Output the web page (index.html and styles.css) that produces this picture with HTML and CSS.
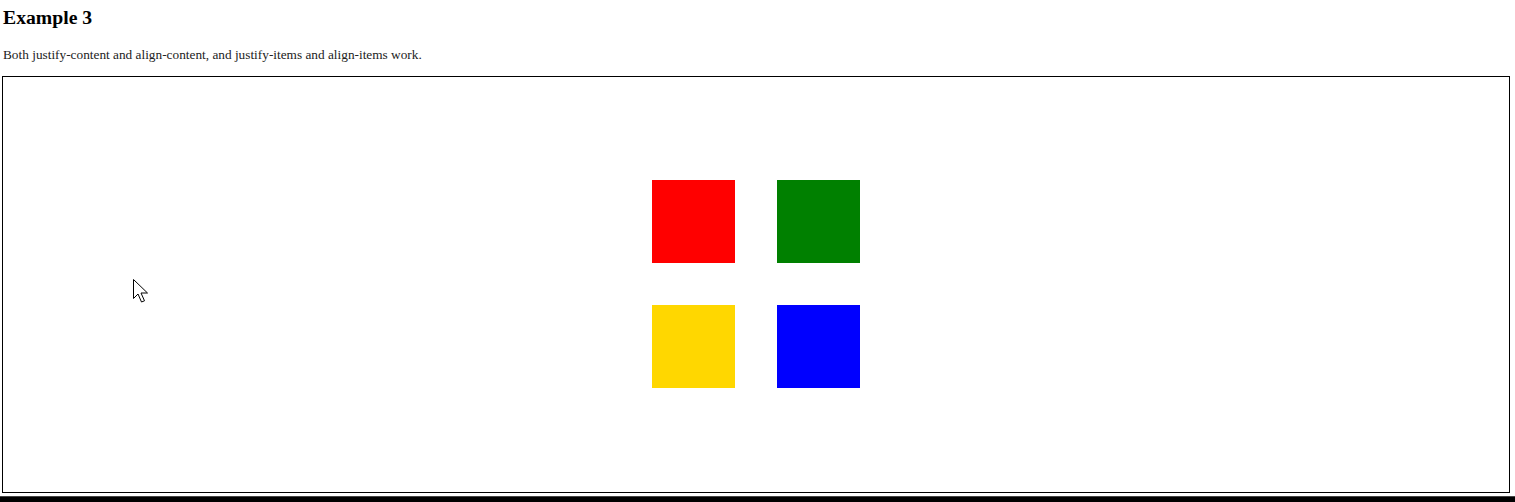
FILE: index.html
```html
<!DOCTYPE html>
<html>
<head>
<meta charset="utf-8">
<title>Example 3</title>
<link rel="stylesheet" href="styles.css">
</head>
<body>
<h3 class="title">Example 3</h3>
<p class="desc">Both justify-content and align-content, and justify-items and align-items work.</p>
<div class="grid">
  <div class="cell red"></div>
  <div class="cell green"></div>
  <div class="cell yellow"></div>
  <div class="cell blue"></div>
</div>
<div class="next"></div>
<svg class="cursor" width="16" height="25" viewBox="0 0 16 25">
  <path d="M0.5 0.5 L0.5 19.5 L5 15 L8.5 23 L11.5 21.8 L8 14 L14.5 14 Z" fill="#fff" stroke="#000" stroke-width="1" stroke-linejoin="miter"/>
</svg>
</body>
</html>
```

FILE: styles.css
```css
html, body {
  margin: 0;
  padding: 0;
  background: #fff;
  overflow: hidden;
}
body {
  padding: 0 5px 0 2px;
  font-family: "Liberation Serif", "Times New Roman", serif;
  color: #000;
}
.title {
  margin: 7px 0 0 1px;
  font-size: 19.7px;
  font-weight: bold;
  line-height: 21.6px;
}
.desc {
  margin: 19px 0 0 1px;
  font-size: 13.3px;
  line-height: 14.4px;
  color: #222;
}
.grid {
  margin-top: 14px;
  height: 414px;
  padding-bottom: 1px;
  border: 1px solid #000;
  display: grid;
  grid-template-columns: repeat(2, 83px);
  grid-template-rows: repeat(2, 83px);
  gap: 42px;
  justify-content: center;
  align-content: center;
}
.cell { width: 83px; height: 83px; }
.red { background: #ff0000; }
.green { background: #008000; }
.yellow { background: #ffd700; }
.blue { background: #0000ff; }
.next {
  margin: 3px -5px 0 -2px;
  height: 10px;
  border-top: 1px solid #444;
  background: #000;
}
.cursor {
  position: absolute;
  left: 133px;
  top: 279px;
}
```
